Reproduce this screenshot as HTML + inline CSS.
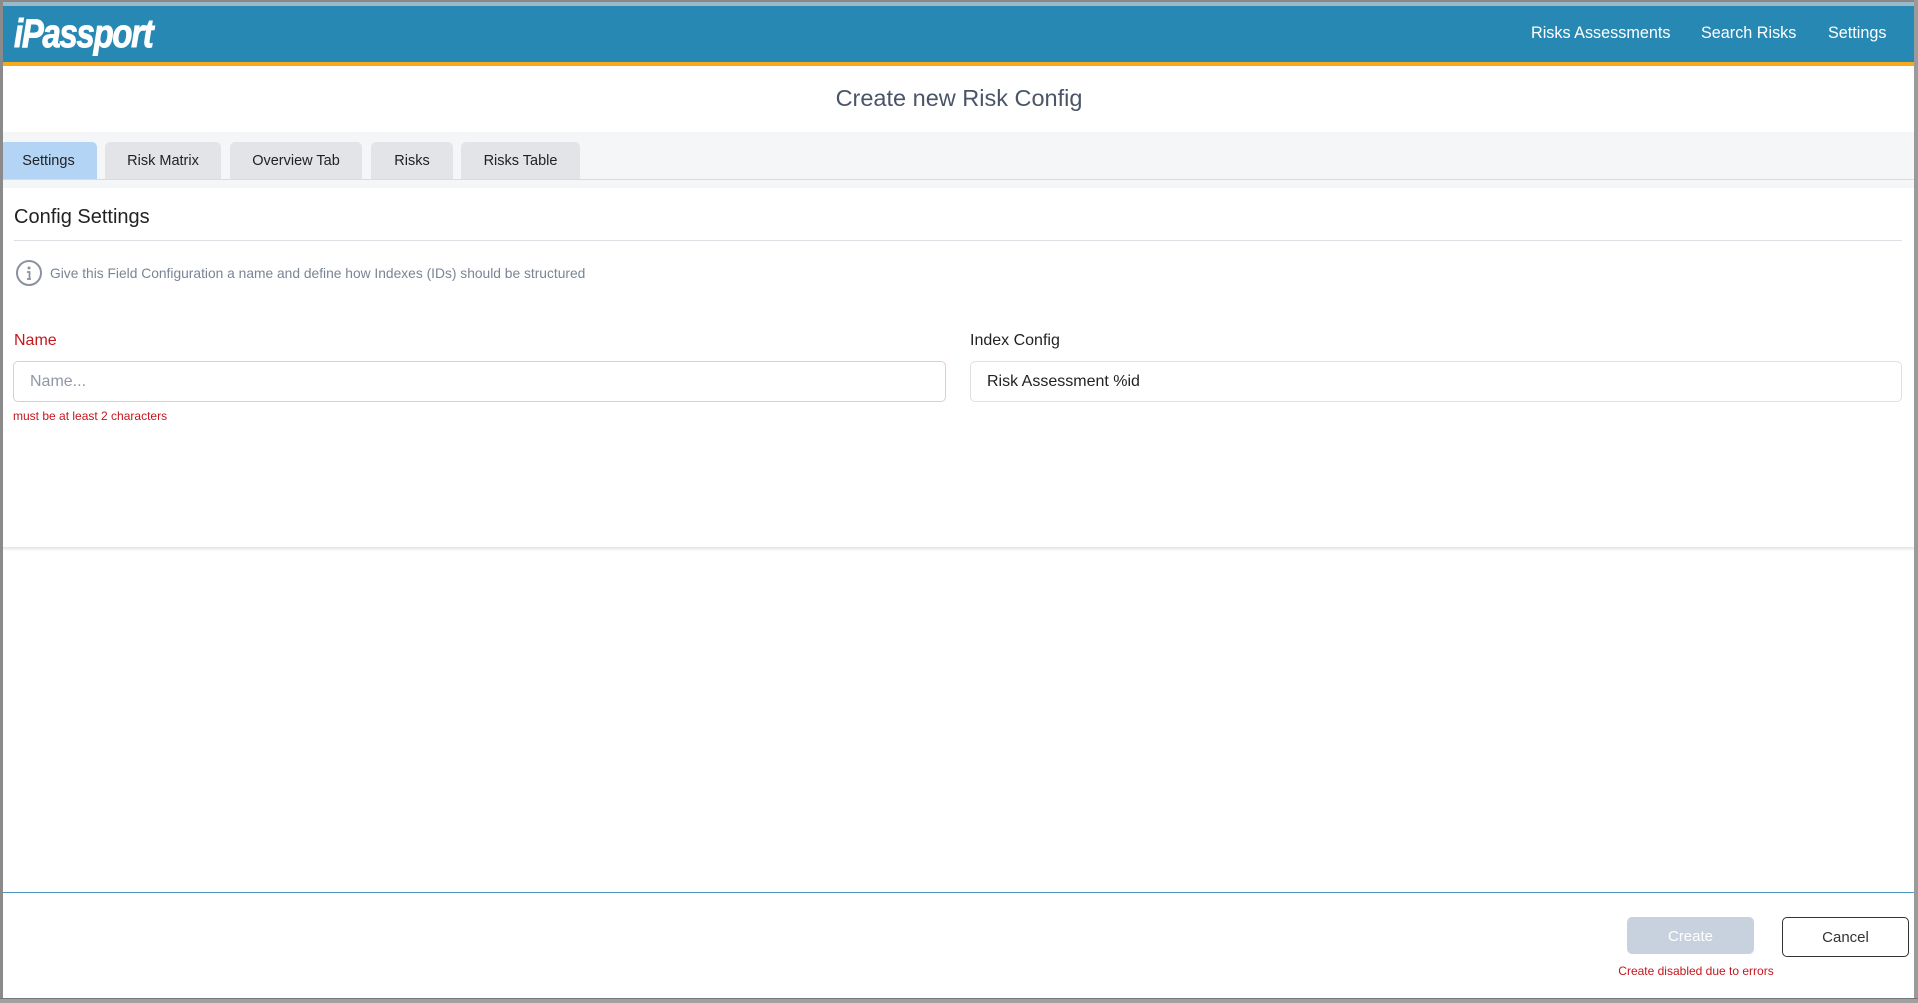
<!DOCTYPE html>
<html><head><meta charset="utf-8"><style>
*{box-sizing:border-box;margin:0;padding:0}
body{width:1918px;height:1003px;position:relative;overflow:hidden;background:#fff;font-family:"Liberation Sans",Arial,sans-serif}
.a{position:absolute}
.tab{position:absolute;top:142px;height:37px;background:#e2e4e8;border-radius:5px 5px 0 0;font-size:14.5px;color:#222;text-align:center;line-height:39px}
</style></head><body>
<div class="a" style="left:0;top:0;width:1918px;height:6px;background:#9ab8c8;border-top:2px solid #888"></div>
<div class="a" style="left:0;top:6px;width:1918px;height:56px;background:#2788b4"></div>
<div class="a" style="left:0;top:62px;width:1918px;height:4px;background:#f6a91e"></div>
<div class="a" style="left:14px;top:12px;font-size:40px;font-weight:bold;font-style:italic;color:#fff;transform:scaleX(0.82);transform-origin:left top;letter-spacing:-1.5px;-webkit-text-stroke:1px #fff">iPassport</div>
<div class="a" style="left:1531px;top:24px;font-size:16.2px;color:#fff">Risks Assessments</div>
<div class="a" style="left:1701px;top:24px;font-size:16.2px;color:#fff">Search Risks</div>
<div class="a" style="left:1828px;top:24px;font-size:16.2px;color:#fff">Settings</div>
<div class="a" style="left:0;top:85px;width:1918px;text-align:center;font-size:23.5px;color:#4a5568">Create new Risk Config</div>
<div class="a" style="left:0;top:132px;width:1918px;height:56px;background:#f5f6f8"></div>
<div class="a" style="left:0;top:179px;width:1918px;height:1px;background:#d8dbe0"></div>
<div class="tab" style="left:0;width:97px;background:#b3d4f5">Settings</div>
<div class="tab" style="left:105px;width:116px">Risk Matrix</div>
<div class="tab" style="left:230px;width:132px">Overview Tab</div>
<div class="tab" style="left:371px;width:82px">Risks</div>
<div class="tab" style="left:461px;width:119px">Risks Table</div>
<div class="a" style="left:0;top:188px;width:1918px;height:359px;background:#fff;box-shadow:0 2px 3px rgba(0,0,0,0.12)"></div>
<div class="a" style="left:14px;top:206px;font-size:20px;color:#222">Config Settings</div>
<div class="a" style="left:14px;top:240px;width:1888px;height:1px;background:#dde0e5"></div>
<svg class="a" style="left:15px;top:259px" width="28" height="28" viewBox="0 0 28 28"><circle cx="14" cy="14" r="12" fill="none" stroke="#8a929e" stroke-width="2"/><circle cx="14" cy="9" r="1.5" fill="#8a929e"/><path d="M12 13h2.5v7M12 20h4" stroke="#8a929e" stroke-width="1.8" fill="none"/></svg>
<div class="a" style="left:50px;top:266px;font-size:13.8px;color:#7a8594">Give this Field Configuration a name and define how Indexes (IDs) should be structured</div>
<div class="a" style="left:14px;top:332px;font-size:16px;color:#c4161c">Name</div>
<div class="a" style="left:970px;top:332px;font-size:16px;color:#222">Index Config</div>
<div class="a" style="left:13px;top:361px;width:933px;height:41px;border:1px solid #f7c2c6;border-radius:5px;font-size:16px;color:#8e98a6;padding:11px 0 0 16px">Name...</div>
<div class="a" style="left:970px;top:361px;width:932px;height:41px;border:1px solid #dde0e5;border-radius:5px;font-size:16px;color:#222;padding:11px 0 0 16px">Risk Assessment %id</div>
<div class="a" style="left:13px;top:409px;font-size:12px;color:#c4161c">must be at least 2 characters</div>
<div class="a" style="left:0;top:892px;width:1918px;height:1px;background:#4a96c0"></div>
<div class="a" style="left:1627px;top:917px;width:127px;height:37px;background:#c8d2de;border-radius:5px;color:#fff;font-size:15px;text-align:center;line-height:39px">Create</div>
<div class="a" style="left:1782px;top:917px;width:127px;height:40px;border:1px solid #333;border-radius:5px;color:#333;font-size:15px;text-align:center;line-height:40px">Cancel</div>
<div class="a" style="left:1610px;top:964px;width:172px;text-align:center;font-size:12px;color:#c4161c">Create disabled due to errors</div>
<div class="a" style="left:0;top:0;width:3px;height:1003px;background:#8a8a8a"></div>
<div class="a" style="left:1914px;top:0;width:4px;height:1003px;background:#9a9a9a"></div>
<div class="a" style="left:0;top:998px;width:1918px;height:5px;background:#a0a0a0;border-top:1px solid #777"></div>
</body></html>
